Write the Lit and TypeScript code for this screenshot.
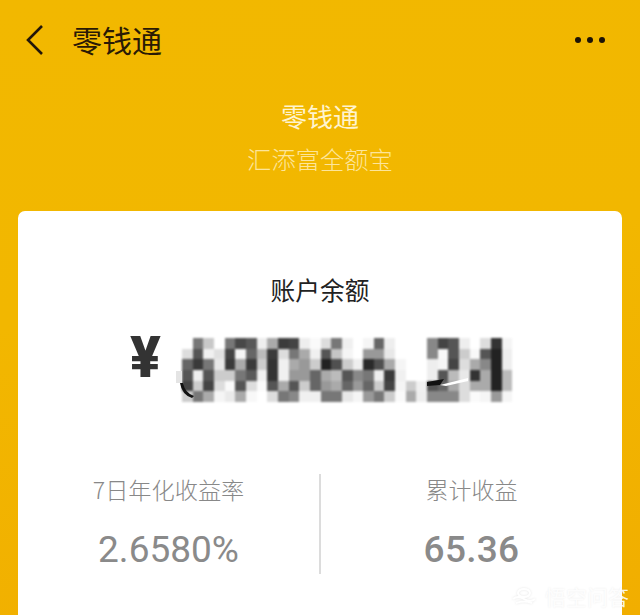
import { LitElement, html, css } from "lit";
import { customElement } from "lit/decorators.js";

const ROWS = [
  "ff 77 c8 ff 77 48 58 ee aa 3c 44 ee fa dd 77 f0 ff f5 66 ee ff ff ff 88 44 55 ee ff dd 33 f4",
  "dd 55 f0 e0 44 f5 66 bb 3a dd 77 aa f0 55 c5 f5 ff 99 99 e8 ff ff ff 88 f8 55 cc f8 55 22 ee",
  "66 3a 77 e8 3a aa 3a cc 33 f0 aa 99 cc 22 50 cc ee 2a 50 aa f5 ff ff ee f5 44 dd aa 88 22 ee",
  "55 ee 55 cc cc 77 5a f0 33 f0 99 99 66 aa bb 55 88 77 ee 3a f0 ff ff ee 55 bb e8 33 aa 22 bb",
  "44 cc 44 dd fa 55 dd fa 55 aa 55 cc 66 99 aa 66 99 66 cc 44 f5 cc f0 55 66 aa dd aa aa 22 bb",
  "cc 77 aa f5 ea aa f8 ff dd 77 88 f0 f0 77 77 e8 f5 99 77 cc fa aa ee 88 88 88 dd fa f5 99 f5",
].map((r) => r.split(" "));

@customElement("app-root")
export class AppRoot extends LitElement {
  static styles = css`
    :host {
      display: block;
      width: 640px;
      height: 615px;
      overflow: hidden;
      position: relative;
      background: linear-gradient(170deg, #f2b800 0%, #f2b700 45%, #f1ae00 100%);
      font-family: "Noto Sans CJK SC", "Noto Sans", sans-serif;
    }
    .nav {
      height: 80px;
      display: flex;
      align-items: center;
      padding: 0 35px 0 24px;
      box-sizing: border-box;
    }
    .back { width: 22px; height: 34px; flex: none; }
    .nav-title {
      margin: -3px 0 0 26px;
      font-size: 30px;
      line-height: 40px;
      color: #2a1a05;
      font-weight: 400;
      flex: 1;
    }
    .dots { display: flex; gap: 6px; }
    .dot { width: 6px; height: 6px; border-radius: 50%; background: #1c1206; }
    .hero {
      height: 131px;
      display: flex;
      flex-direction: column;
      align-items: center;
      padding-top: 18px;
      box-sizing: border-box;
    }
    .hero-title { font-size: 26px; line-height: 36px; color: #fff4cf; font-weight: 400; }
    .hero-sub {
      margin-top: 7px;
      font-size: 24.3px;
      line-height: 36px;
      color: #fde59a;
      font-weight: 300;
    }
    .card {
      margin: 0 18px;
      height: 420px;
      background: #fff;
      border-radius: 7px;
      display: flex;
      flex-direction: column;
    }
    .label {
      margin-top: 58px;
      text-align: center;
      font-size: 24.7px;
      line-height: 40px;
      color: #222;
    }
    .amount {
      margin-top: 29px;
      display: flex;
      padding-left: 112px;
      height: 64px;
      position: relative;
    }
    .yen {
      width: 52px;
      font-family: Roboto, sans-serif;
      font-weight: 900;
      font-size: 57px;
      line-height: 40px;
      height: 40px;
      color: #333;
    }
    .mosaic {
      display: grid;
      grid-template-columns: repeat(31, 10.67px);
      grid-auto-rows: 10.67px;
      filter: blur(0.8px);
    }
    .scratch { position: absolute; left: 150px; top: 0; width: 350px; height: 70px; }
    .stats {
      margin-top: 72px;
      display: grid;
      grid-template-columns: 1fr 2px 1fr;
      height: 100px;
    }
    .stat { display: flex; flex-direction: column; align-items: center; }
    .stat-label {
      margin-top: -2px;
      font-size: 23.2px;
      line-height: 34px;
      color: #888;
      font-weight: 300;
    }
    .stat-label.right { font-size: 23px; }
    .stat-val {
      margin-top: 22px;
      font-family: Roboto, sans-serif;
      font-size: 37px;
      line-height: 44px;
      color: #8a8a8a;
    }
    .stat-val.bold { font-weight: 500; letter-spacing: 0.3px; }
    .rule { background: #dcdcdc; }
    .mark {
      position: absolute;
      right: 11px;
      top: 584px;
      display: flex;
      align-items: center;
      gap: 8px;
      font-size: 21px;
      line-height: 24px;
      color: rgba(255, 255, 255, 0.9);
      text-shadow: 0 0 2px rgba(0, 0, 0, 0.08);
    }
    .mark svg { width: 26px; height: 18px; filter: drop-shadow(0 0 1px rgba(0, 0, 0, 0.1)); }
  `;

  render() {
    return html`
      <div class="nav">
        <svg class="back" viewBox="0 0 22 34" fill="none" stroke="#22160a" stroke-width="2.6">
          <path d="M18 3 L4 17 L18 31" />
        </svg>
        <div class="nav-title">零钱通</div>
        <div class="dots"><span class="dot"></span><span class="dot"></span><span class="dot"></span></div>
      </div>
      <div class="hero">
        <div class="hero-title">零钱通</div>
        <div class="hero-sub">汇添富全额宝</div>
      </div>
      <div class="card">
        <div class="label">账户余额</div>
        <div class="amount">
          <div class="yen">¥</div>
          <div class="mosaic">
            ${ROWS.flat().map((g) => html`<i style="background:#${g}${g}${g}"></i>`)}
          </div>
          <svg class="scratch" viewBox="0 0 350 70">
            <path d="M8 33 H14 V45 H8 Z" fill="#e4e4e4" />
            <path d="M12 45 L15 45 Q17 55 26 58 L24 60 Q14 57 12 45 Z" fill="#111" />
            <path d="M259 44 L276 41 L272 47 L259 48 Z" fill="#111" />
            <path d="M272 47 L300 40 L300 43 L278 48 Z" fill="#fff" />
          </svg>
        </div>
        <div class="stats">
          <div class="stat">
            <div class="stat-label">7日年化收益率</div>
            <div class="stat-val">2.6580%</div>
          </div>
          <div class="rule"></div>
          <div class="stat">
            <div class="stat-label right">累计收益</div>
            <div class="stat-val bold">65.36</div>
          </div>
        </div>
      </div>
      <div class="mark">
        <svg viewBox="0 0 26 18" fill="none" stroke="#fff" stroke-width="2">
          <ellipse cx="13" cy="6" rx="6" ry="4" />
          <path d="M2 12 Q7 8 13 12 Q19 16 24 12" />
          <path d="M5 16 Q13 13 21 16" />
        </svg>
        <span>悟空问答</span>
      </div>
    `;
  }
}
